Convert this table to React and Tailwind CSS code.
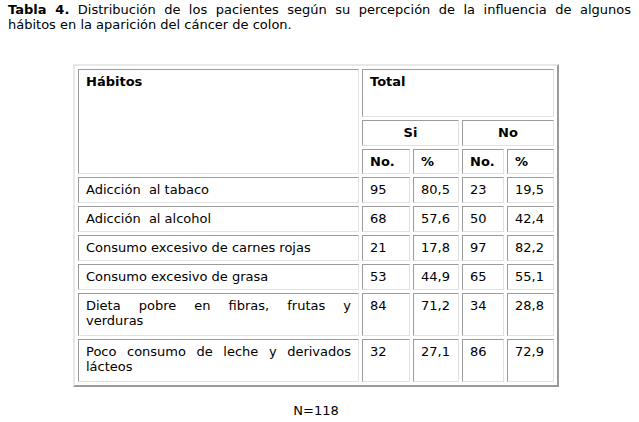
import React from "react";

const cell =
  "border border-t-[#9c9c9c] border-l-[#9c9c9c] border-r-[#e2e2e2] border-b-[#e2e2e2] px-[7px] pt-[4px] align-top text-left";

const rows = [
  [["Adicción  al tabaco"], "95", "80,5", "23", "19,5"],
  [["Adicción  al alcohol"], "68", "57,6", "50", "42,4"],
  [["Consumo excesivo de carnes rojas"], "21", "17,8", "97", "82,2"],
  [["Consumo excesivo de grasa"], "53", "44,9", "65", "55,1"],
  [["Dieta pobre en fibras, frutas y", "verduras"], "84", "71,2", "34", "28,8"],
  [["Poco consumo de leche y derivados", "lácteos"], "32", "27,1", "86", "72,9"],
];

export default function App() {
  return (
    <div
      className="bg-white text-black text-[13px] leading-[15px] pt-[2px] pb-[8px]"
      style={{ fontFamily: "'DejaVu Sans', Verdana, sans-serif" }}
    >
      <div className="mx-[8px]">
        <p className="text-justify [text-align-last:justify]">
          <b>Tabla 4.</b> Distribución de los pacientes según su percepción de
          la influencia de algunos
        </p>
        <p>hábitos en la aparición del cáncer de colon.</p>
      </div>
      <div className="ml-[73px] w-[486px] mt-[32px]">
        <table className="table-fixed w-[486px] border-separate border-spacing-[3px] border-2 border-t-[#e8e8e8] border-l-[#e8e8e8] border-r-[#9a9a9a] border-b-[#9a9a9a]">
          <colgroup>
            <col className="w-[281px]" />
            <col className="w-[48px]" />
            <col className="w-[46px]" />
            <col className="w-[42px]" />
            <col className="w-[47px]" />
          </colgroup>
          <tbody>
            <tr className="h-[48px]">
              <th rowSpan={3} className={cell + " pb-[5px] font-bold"}>
                Hábitos
              </th>
              <th colSpan={4} className={cell + " pb-[5px] font-bold"}>
                Total
              </th>
            </tr>
            <tr className="h-[26px]">
              <th colSpan={2} className={cell + " pb-[5px] font-bold !text-center"}>
                Si
              </th>
              <th colSpan={2} className={cell + " pb-[5px] font-bold !text-center"}>
                No
              </th>
            </tr>
            <tr className="h-[25px]">
              <th className={cell + " pb-[4px] font-bold"}>No.</th>
              <th className={cell + " pb-[4px] font-bold"}>%</th>
              <th className={cell + " pb-[4px] font-bold"}>No.</th>
              <th className={cell + " pb-[4px] font-bold"}>%</th>
            </tr>
            {rows.map((r, i) => {
              const two = r[0].length > 1;
              const pb = two ? " pb-[7px]" : " pb-[5px]";
              return (
                <tr key={i}>
                  <td className={cell + pb + " whitespace-pre-wrap"}>
                    {two ? (
                      <>
                        <span className="block text-justify [text-align-last:justify]">
                          {r[0][0]}
                        </span>
                        <span className="block">{r[0][1]}</span>
                      </>
                    ) : (
                      r[0][0]
                    )}
                  </td>
                  <td className={cell + pb}>{r[1]}</td>
                  <td className={cell + pb}>{r[2]}</td>
                  <td className={cell + pb}>{r[3]}</td>
                  <td className={cell + pb}>{r[4]}</td>
                </tr>
              );
            })}
          </tbody>
        </table>
        <p className="text-center mt-[16px]">N=118</p>
      </div>
    </div>
  );
}
